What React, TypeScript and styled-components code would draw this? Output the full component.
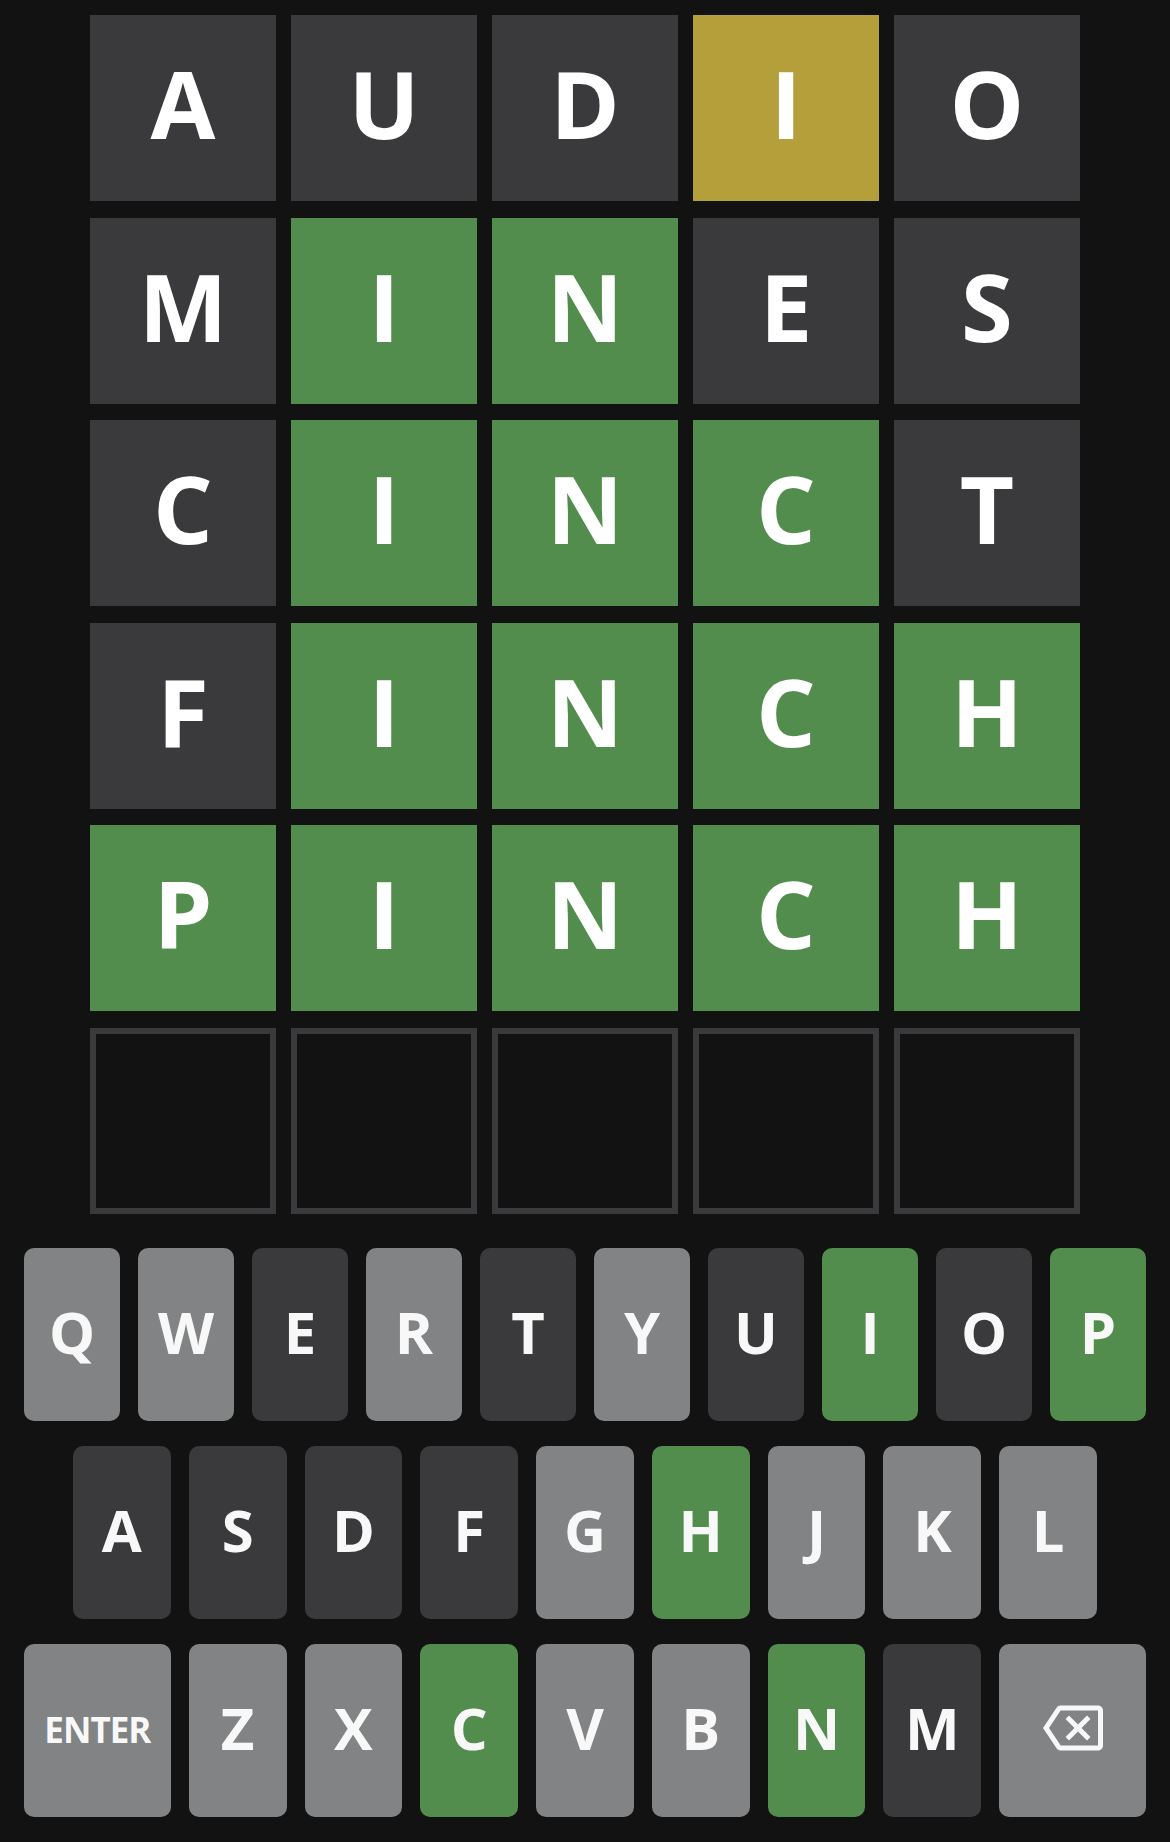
import React from "react";
import styled, { createGlobalStyle } from "styled-components";

type State = "absent" | "present" | "correct" | "empty" | "unused";

const colors: Record<State, string> = {
  absent: "#3a3a3c",
  present: "#b59f3b",
  correct: "#538d4e",
  empty: "#121213",
  unused: "#818384",
};

const GlobalStyle = createGlobalStyle`
  html, body {
    margin: 0;
    padding: 0;
    background: #121213;
  }
  body {
    font-family: "Open Sans", "Liberation Sans", Arial, sans-serif;
  }
`;

const Page = styled.div`
  width: 1170px;
  height: 1842px;
  box-sizing: border-box;
  background: #121213;
  display: flex;
  flex-direction: column;
  align-items: center;
  padding-top: 15px;
`;

const Board = styled.div`
  display: grid;
  grid-template-columns: repeat(5, 186px);
  grid-auto-rows: 186px;
  column-gap: 15px;
  row-gap: 16.6px;
`;

const Tile = styled.div<{ $state: State }>`
  box-sizing: border-box;
  display: flex;
  align-items: center;
  justify-content: center;
  background: ${(p) => colors[p.$state]};
  border: ${(p) => (p.$state === "empty" ? "6px solid #3a3a3c" : "none")};
  color: #ffffff;
  font-family: "Open Sans", "Liberation Sans", Arial, sans-serif;
  font-weight: 700;
  font-size: 94px;
  line-height: 1;
  text-transform: uppercase;
  padding-bottom: 10px;
`;

const Keyboard = styled.div`
  align-self: stretch;
  margin-top: 34px;
  padding: 0 24px;
  display: flex;
  flex-direction: column;
  gap: 25px;
`;

const KeyRow = styled.div`
  display: flex;
  width: 100%;
`;

const Spacer = styled.div`
  flex: 0.5;
`;

const Key = styled.button<{ $state: State; $wide?: boolean; $small?: boolean }>`
  flex: ${(p) => (p.$wide ? 1.5 : 1)};
  min-width: 0;
  height: 173px;
  margin: 0 18px 0 0;
  padding: 0 0 ${(p) => (p.$small ? "2px" : "4px")} 0;
  border: none;
  border-radius: 10px;
  background: ${(p) => colors[p.$state]};
  color: #f8f8f8;
  font-family: "Open Sans", "Liberation Sans", Arial, sans-serif;
  font-weight: 700;
  font-size: ${(p) => (p.$small ? "35px" : "58px")};
  letter-spacing: ${(p) => (p.$small ? "-1px" : "0")};
  line-height: 1;
  display: flex;
  align-items: center;
  justify-content: center;
  &:last-of-type {
    margin-right: 0;
  }
`;

const rows: { word: string; states: State[] }[] = [
  { word: "AUDIO", states: ["absent", "absent", "absent", "present", "absent"] },
  { word: "MINES", states: ["absent", "correct", "correct", "absent", "absent"] },
  { word: "CINCT", states: ["absent", "correct", "correct", "correct", "absent"] },
  { word: "FINCH", states: ["absent", "correct", "correct", "correct", "correct"] },
  { word: "PINCH", states: ["correct", "correct", "correct", "correct", "correct"] },
  { word: "     ", states: ["empty", "empty", "empty", "empty", "empty"] },
];

const keyState: Record<string, State> = {
  Q: "unused", W: "unused", E: "absent", R: "unused", T: "absent", Y: "unused",
  U: "absent", I: "correct", O: "absent", P: "correct",
  A: "absent", S: "absent", D: "absent", F: "absent", G: "unused", H: "correct",
  J: "unused", K: "unused", L: "unused",
  Z: "unused", X: "unused", C: "correct", V: "unused", B: "unused", N: "correct",
  M: "absent",
};

const BackspaceIcon = () => (
  <svg width="60" height="60" viewBox="0 0 24 24" aria-hidden="true">
    <path
      fill="#f8f8f8"
      d="M22 3H7c-.69 0-1.23.35-1.59.88L0 12l5.41 8.11c.36.53.9.89 1.59.89h15c1.1 0 2-.9 2-2V5c0-1.1-.9-2-2-2zm0 16H7.07L2.4 12l4.66-7H22v14zm-11.59-2L14 13.41 17.59 17 19 15.59 15.41 12 19 8.41 17.59 7 14 10.59 10.41 7 9 8.41 12.59 12 9 15.59z"
    />
  </svg>
);

export default function App() {
  return (
    <>
      <GlobalStyle />
      <Page>
        <Board>
          {rows.map((r, ri) =>
            r.states.map((s, ci) => (
              <Tile key={`${ri}-${ci}`} $state={s}>
                {r.word[ci].trim()}
              </Tile>
            ))
          )}
        </Board>
        <Keyboard>
          <KeyRow>
            {"QWERTYUIOP".split("").map((k) => (
              <Key key={k} $state={keyState[k]}>{k}</Key>
            ))}
          </KeyRow>
          <KeyRow>
            <Spacer />
            {"ASDFGHJKL".split("").map((k) => (
              <Key key={k} $state={keyState[k]}>{k}</Key>
            ))}
            <Spacer />
          </KeyRow>
          <KeyRow>
            <Key $state="unused" $wide $small>ENTER</Key>
            {"ZXCVBNM".split("").map((k) => (
              <Key key={k} $state={keyState[k]}>{k}</Key>
            ))}
            <Key $state="unused" $wide aria-label="backspace">
              <BackspaceIcon />
            </Key>
          </KeyRow>
        </Keyboard>
      </Page>
    </>
  );
}
